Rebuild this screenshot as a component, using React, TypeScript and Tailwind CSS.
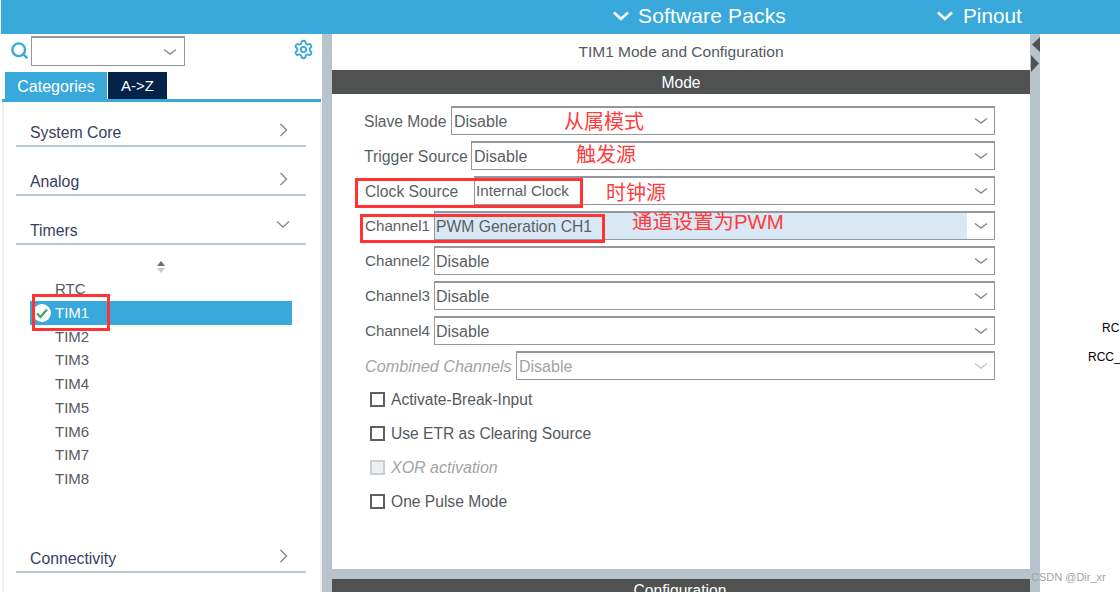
import { Search, Settings } from 'lucide-react';

const SANS = 'font-["Liberation_Sans",Arial,sans-serif]';
const CJK = 'font-["Liberation_Sans","Noto_Sans_CJK_SC",sans-serif]';

function Caret({ faded }: { faded?: boolean }) {
  return (
    <svg width="14" height="8" viewBox="0 0 14 8" className="shrink-0">
      <path
        d="M1 1.5 L7 6 L13 1.5"
        fill="none"
        stroke={faded ? '#c9c9c9' : '#8b8b8b'}
        strokeWidth="1.5"
      />
    </svg>
  );
}

function Chevron({ open }: { open?: boolean }) {
  return open ? (
    <svg width="14" height="9" viewBox="0 0 14 9">
      <path d="M1 1.5 L7 7 L13 1.5" fill="none" stroke="#8b8b8b" strokeWidth="1.4" />
    </svg>
  ) : (
    <svg width="9" height="14" viewBox="0 0 9 14">
      <path d="M1.5 1 L7.5 7 L1.5 13" fill="none" stroke="#8b8b8b" strokeWidth="1.5" />
    </svg>
  );
}

function CategoryRow({ label, open, className }: { label: string; open?: boolean; className?: string }) {
  return (
    <div
      className={`h-[45px] flex items-end justify-between pl-[14px] pr-[16px] pb-[3px] border-b-2 border-[#b9c6d2] text-[15.8px] leading-[18px] text-[#39405f] ${className ?? ''}`}
    >
      <span>{label}</span>
      <span className={`flex justify-center w-[14px] ${open ? 'mb-[11px]' : 'mb-[5px]'}`}>
        <Chevron open={open} />
      </span>
    </div>
  );
}

const timers = ['RTC', 'TIM1', 'TIM2', 'TIM3', 'TIM4', 'TIM5', 'TIM6', 'TIM7', 'TIM8'];

function Sidebar() {
  return (
    <aside className="w-[322px] shrink-0 flex flex-col bg-white">
      <div className="h-[38px] flex items-start pl-[10px] pr-[8px] pt-[2px]">
        <Search size={19} strokeWidth={3} className="text-[#39a9dc] mt-[5px] mr-[2px] shrink-0" />
        <div className="w-[154px] h-[30px] border border-t-2 border-[#93989c] flex items-center justify-end pr-[7px]">
          <Caret />
        </div>
        <Settings size={21} strokeWidth={2.2} className="text-[#39a9dc] ml-auto mt-[3px]" />
      </div>
      <div className="flex h-[27px] ml-[5px] gap-px text-white">
        <div className="w-[102px] bg-[#39a9dc] flex items-center justify-center pt-[2px] text-[16px]">Categories</div>
        <div className="w-[59px] bg-[#03234b] flex items-center justify-center pt-[2px] text-[15px]">A-&gt;Z</div>
      </div>
      <div className="h-[3px] ml-[2px] mr-px bg-[#39a9dc]" />
      <div className="flex-1 ml-[2px] mr-0 border-x-[2px] border-[#f0f0f0] pl-[12px] pr-[14px] min-h-0">
        <CategoryRow label="System Core" />
        <CategoryRow label="Analog" className="mt-[4px]" />
        <CategoryRow label="Timers" open className="mt-[4px]" />
        <div className="h-[32px] flex items-end justify-center pb-[3px] pr-px">
          <svg width="10" height="14" viewBox="0 0 10 14">
            <path d="M5 1 L9 6 H1 Z" fill="#6d6d6d" />
            <path d="M1 8 H9 L5 13 Z" fill="#c8c8c8" />
          </svg>
        </div>
        <ul className="text-[15px] leading-[24px] text-[#555a66] ml-[14px] mr-[14px]">
          {timers.map((name) => (
            <li
              key={name}
              className={`h-[23.8px] flex items-center pl-[25px] relative ${
                name === 'TIM1' ? 'bg-[#39a9dc] text-white' : ''
              }`}
            >
              {name === 'TIM1' && (
                <svg width="18" height="18" viewBox="0 0 18 18" className="absolute left-[3px] top-[3px]">
                  <circle cx="9" cy="9" r="9" fill="#ffffff" />
                  <path d="M4 9.5 L7.5 13 L14 5.5" fill="none" stroke="#45a866" strokeWidth="2.4" />
                </svg>
              )}
              {name}
            </li>
          ))}
        </ul>
        <CategoryRow label="Connectivity" className="mt-[37px]" />
      </div>
    </aside>
  );
}

interface ModeRow {
  label: string;
  value: string;
  labelClass: string;
  valueClass: string;
  highlight?: boolean;
  disabled?: boolean;
}

const modeRows: ModeRow[] = [
  { label: 'Slave Mode', value: 'Disable', labelClass: 'w-[87px] text-[15.6px]', valueClass: 'pl-[2px] text-[16px]' },
  { label: 'Trigger Source', value: 'Disable', labelClass: 'w-[107px] text-[15.8px]', valueClass: 'pl-[2px] text-[16px]' },
  { label: 'Clock Source', value: 'Internal Clock', labelClass: 'w-[110px] pl-px text-[15.7px]', valueClass: 'pl-[1px] text-[15.2px]' },
  { label: 'Channel1', value: 'PWM Generation CH1', labelClass: 'w-[70px] pl-px text-[15.2px]', valueClass: 'pl-[1px] text-[15.7px]', highlight: true },
  { label: 'Channel2', value: 'Disable', labelClass: 'w-[70px] pl-px text-[15.2px]', valueClass: 'pl-[1px] text-[16px]' },
  { label: 'Channel3', value: 'Disable', labelClass: 'w-[70px] pl-px text-[15.2px]', valueClass: 'pl-[1px] text-[16px]' },
  { label: 'Channel4', value: 'Disable', labelClass: 'w-[70px] pl-px text-[15.2px]', valueClass: 'pl-[1px] text-[16px]' },
  { label: 'Combined Channels', value: 'Disable', labelClass: 'w-[152px] pl-px text-[16.2px]', valueClass: 'pl-[2px] text-[16px]', disabled: true },
];

function Select({ row }: { row: ModeRow }) {
  return (
    <div className="h-[29px] flex items-center">
      <span
        className={`${row.labelClass} pt-[2px] shrink-0 whitespace-nowrap ${
          row.disabled ? 'italic text-[#a3a3a3]' : 'text-[#5b5f63]'
        }`}
      >
        {row.label}
      </span>
      <div className="flex-1 h-full border border-t-2 border-[#93989c] flex items-stretch">
        <div
          className={`flex-1 flex items-center pt-px ${row.valueClass} ${row.highlight ? 'bg-[#d9e8f5]' : ''} ${
            row.disabled ? 'text-[#a3a3a3]' : 'text-[#5b5f63]'
          }`}
        >
          {row.value}
        </div>
        <div className="w-[27px] flex items-center justify-center">
          <Caret faded={row.disabled} />
        </div>
      </div>
    </div>
  );
}

const checks = [
  { label: 'Activate-Break-Input' },
  { label: 'Use ETR as Clearing Source' },
  { label: 'XOR activation', disabled: true },
  { label: 'One Pulse Mode' },
];

function ModePanel() {
  return (
    <main className="w-[698px] shrink-0 flex flex-col bg-white">
      <div className="h-[36px] flex items-center justify-center text-[15.5px] text-[#55595d]">
        TIM1 Mode and Configuration
      </div>
      <div className="h-[24px] bg-[#505251] text-white text-[15.6px] pt-[2px] flex items-center justify-center">Mode</div>
      <div className="flex-1 pt-[12px] pl-[32px] min-h-0 text-[16px]">
        <div className="w-[631px] flex flex-col gap-[6px]">
          {modeRows.map((row) => (
            <Select key={row.label} row={row} />
          ))}
        </div>
        <div className="mt-[12px] ml-[6px] flex flex-col gap-[19px]">
          {checks.map((c) => (
            <div key={c.label} className="h-[15px] flex items-center">
              <span
                className={`w-[15px] h-[15px] border-2 mr-[6px] ${
                  c.disabled ? 'border-[#c9ced2] bg-[#eceef0]' : 'border-[#5f5f5f]'
                }`}
              />
              <span className={c.disabled ? 'italic text-[#a3a3a3]' : 'text-[15.6px] text-[#55595d]'}>{c.label}</span>
            </div>
          ))}
        </div>
      </div>
      <div className="h-[10px] bg-[#b8c4cb]" />
      <div className="h-[13px] bg-[#505251] overflow-hidden text-white text-[15.6px] leading-[18px] pt-[3px] pr-[2px] text-center">
        Configuration
      </div>
    </main>
  );
}

function Divider({ arrows }: { arrows?: boolean }) {
  return (
    <div className="w-[10px] shrink-0 bg-[#b8c4cb] flex flex-col items-center pt-[3px] gap-[3px]">
      {arrows && (
        <>
          <svg width="10" height="15" viewBox="0 0 10 15">
            <path d="M2 7.5 L10 0 V15 Z" fill="#505251" />
          </svg>
          <svg width="10" height="17" viewBox="0 0 10 17">
            <path d="M1 0 L9 8.5 L1 17 Z" fill="#505251" />
          </svg>
        </>
      )}
    </div>
  );
}

export default function App() {
  return (
    <div className={`relative w-[1120px] h-[592px] overflow-hidden flex flex-col bg-white ${SANS}`}>
      <header className="h-[34px] shrink-0 ml-px bg-[#39a9dc] text-white flex items-center pb-[3px]">
        <svg width="18" height="12" viewBox="0 0 18 12" className="ml-[611px]">
          <path d="M2 2.5 L9 9 L16 2.5" fill="none" stroke="#ffffff" strokeWidth="2.6" />
        </svg>
        <span className="ml-[8px] text-[21px] tracking-[0.15px]">Software Packs</span>
        <svg width="18" height="12" viewBox="0 0 18 12" className="ml-[150px]">
          <path d="M2 2.5 L9 9 L16 2.5" fill="none" stroke="#ffffff" strokeWidth="2.6" />
        </svg>
        <span className="ml-[9px] text-[20.7px]">Pinout</span>
      </header>
      <div className="flex-1 flex min-h-0">
        <Sidebar />
        <Divider />
        <ModePanel />
        <Divider arrows />
        <div className="flex-1 bg-white" />
      </div>

      {/* pin labels on the chip view */}
      <span className="absolute left-[1102px] top-[319px] text-[12px] text-black whitespace-nowrap">RC</span>
      <span className="absolute left-[1088px] top-[348px] text-[12px] text-black whitespace-nowrap">RCC_</span>

      {/* hand-drawn annotations */}
      <div className="absolute left-[355px] top-[178px] w-[228px] h-[30px] border-[3px] border-[#ff3333]" />
      <div className="absolute left-[360px] top-[214px] w-[245px] h-[29px] border-[3px] border-[#ff3333]" />
      <div className="absolute left-[32px] top-[294px] w-[78px] h-[37px] border-[3px] border-[#ff3333]" />
      <span className={`absolute left-[564px] top-[108px] text-[20px] leading-[28px] text-[#ff3b3b] ${CJK}`}>从属模式</span>
      <span className={`absolute left-[576px] top-[141px] text-[20px] leading-[28px] text-[#ff3b3b] ${CJK}`}>触发源</span>
      <span className={`absolute left-[606px] top-[179px] text-[20px] leading-[28px] text-[#ff3b3b] ${CJK}`}>时钟源</span>
      <span className={`absolute left-[632px] top-[208px] text-[20.4px] leading-[28px] text-[#ff3b3b] whitespace-nowrap ${CJK}`}>通道设置为PWM</span>

      <span className="absolute left-[1031px] top-[569px] text-[11px] text-[#a3a3a3] whitespace-nowrap">CSDN @Dir_xr</span>
    </div>
  );
}
